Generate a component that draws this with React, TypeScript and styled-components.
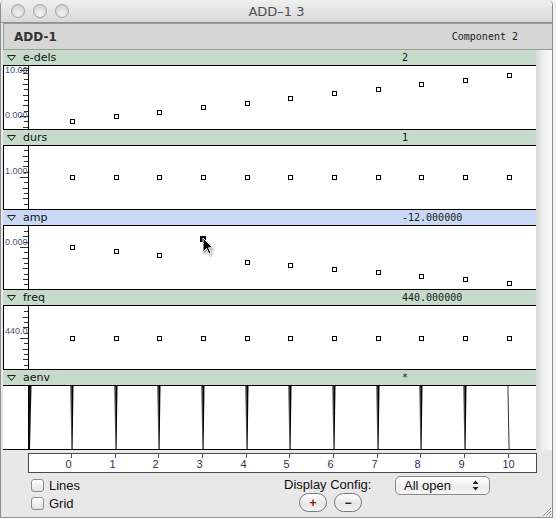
import React from "react";
import styled, { createGlobalStyle } from "styled-components";

const GlobalStyle = createGlobalStyle`
  html, body { margin: 0; padding: 0; background: #f2f2f2; }
  body { font-family: "DejaVu Sans", "Liberation Sans", sans-serif; }
`;

// x of each point inside a plot (plot starts at page x 29)
const XS = Array.from({ length: 11 }, (_, i) => 43 + i * 43.65);

type RulerMark = { text: string; base: number; tick: number };
type PanelData = {
  name: string;
  value: string;
  selected?: boolean;
  ys?: number[];
  ruler?: RulerMark[];
  envelope?: boolean;
};

const panels: PanelData[] = [
  {
    name: "e-dels",
    value: "2",
    ys: XS.map((_, i) => 55 - i * 4.6),
    ruler: [
      { text: "10.00", base: 7, tick: 4 },
      { text: "0.000", base: 52, tick: 50 },
    ],
  },
  {
    name: "durs",
    value: "1",
    ys: XS.map(() => 31),
    ruler: [{ text: "1.000", base: 28, tick: 31 }],
  },
  {
    name: "amp",
    value: "-12.000000",
    selected: true,
    ys: [21, 25, 29, 13, 36, 39, 43, 46, 50, 53, 57],
    ruler: [{ text: "0.000", base: 19, tick: 21 }],
  },
  {
    name: "freq",
    value: "440.000000",
    ys: XS.map(() => 32),
    ruler: [{ text: "440.0", base: 28, tick: 32 }],
  },
  { name: "aenv", value: "*", envelope: true },
];

const Window = styled.div`
  width: 553px;
  height: 518px;
  box-sizing: border-box;
  display: flex;
  flex-direction: column;
  background: #e8e8e8;
  border: 1px solid #8e8e8e;
  border-top: none;
  border-radius: 5px 5px 0 0;
  overflow: hidden;
`;

const TitleBar = styled.div`
  height: 22px;
  flex: 0 0 auto;
  display: grid;
  grid-template-columns: 1fr auto 1fr;
  align-items: center;
  background: linear-gradient(#f0f0f0, #d8d8d8);
  border-bottom: 1px solid #8f8f8f;
`;

const Lights = styled.div`
  display: flex;
  gap: 8px;
  padding-left: 10px;
`;

const Light = styled.span`
  width: 12px;
  height: 12px;
  border-radius: 50%;
  border: 1px solid #a4a4a4;
  background: radial-gradient(circle at 50% 70%, #f4f4f4, #d6d6d6 70%);
`;

const Title = styled.div`
  font-size: 13px;
  color: #505050;
  padding-top: 1px;
`;

const Header = styled.div`
  margin-left: 2px;
  height: 27px;
  box-sizing: border-box;
  flex: 0 0 auto;
  display: flex;
  align-items: center;
  justify-content: space-between;
  padding: 0 34px 0 10px;
  background: #d6d6d6;
  border: 1px solid #9a9a9a;
  border-right: none;
`;

const HeaderName = styled.span`
  font-weight: bold;
  font-size: 12px;
  color: #333;
`;

const HeaderComp = styled.span`
  font: 10px "DejaVu Sans Mono", monospace;
  color: #222;
`;

const Main = styled.div`
  display: flex;
  padding-left: 2px;
  flex: 0 0 auto;
`;

const Panels = styled.div`
  width: 533px;
`;

const Strip = styled.div`
  flex: 1;
  background: linear-gradient(to right, #d9d9d9, #efefef 45%, #f9f9f9);
`;

const LabelBar = styled.div<{ $selected?: boolean }>`
  height: 15px;
  display: grid;
  grid-template-columns: 20px 379px 1fr;
  align-items: center;
  background: ${(p) => (p.$selected ? "#c9d9f5" : "#c6dbc9")};
  font-size: 11px;
  color: #111;
  line-height: 15px;
`;

const Toggle = styled.svg`
  margin-left: 4px;
`;

const Value = styled.span`
  font: 10px "DejaVu Sans Mono", monospace;
  color: #1a1a1a;
`;

const Body = styled.div`
  height: 65px;
  box-sizing: border-box;
  display: flex;
  border-top: 1px solid #000;
  border-bottom: 1px solid #000;
`;

const Ruler = styled.div<{ $bare?: boolean }>`
  width: 26px;
  box-sizing: border-box;
  background: #fff;
  border-left: 1px solid ${(p) => (p.$bare ? "#fff" : "#000")};
  border-right: 1px solid #000;
`;

const Plot = styled.div`
  flex: 1;
  position: relative;
  background: #fff;
`;

const Cursor = styled.svg`
  position: absolute;
  left: 173px;
  top: 11px;
  filter: drop-shadow(1px 2px 1px rgba(0, 0, 0, 0.35));
`;

const Handle = styled.span`
  position: absolute;
  left: 171px;
  top: 10px;
  width: 6px;
  height: 6px;
  background: #000;
`;

const AxisRow = styled.div`
  padding: 3px 0 0 27px;
  flex: 0 0 auto;
`;

const AxisBox = styled.div`
  width: 509px;
  height: 20px;
  box-sizing: border-box;
  border: 1px solid #4a4a4a;
  background: #fff;
`;

const BottomBar = styled.div`
  flex: 1;
  position: relative;
  display: grid;
  grid-template-columns: 253px 111px auto;
  align-items: start;
  padding: 5px 0 0 30px;
  font: 13px "Liberation Sans", Arial, sans-serif;
  color: #111;
`;

const CheckCol = styled.div`
  display: flex;
  flex-direction: column;
  gap: 4px;
`;

const CheckRow = styled.label`
  display: flex;
  align-items: center;
  gap: 5px;
  height: 14px;
`;

const Box = styled.span`
  width: 13px;
  height: 13px;
  box-sizing: border-box;
  border: 1px solid #8c8c8c;
  border-radius: 3px;
  background: linear-gradient(#ffffff, #e2e2e2);
`;

const ConfigCol = styled.div`
  display: flex;
  flex-direction: column;
`;

const ConfigLabel = styled.span`
  line-height: 14px;
`;

const ButtonRow = styled.div`
  display: flex;
  gap: 7px;
  padding-left: 15px;
  margin-top: 1px;
`;

const RoundButton = styled.button<{ $tone?: string }>`
  width: 28px;
  height: 19px;
  padding: 0;
  border-radius: 10px;
  border: 1px solid #7a7a7a;
  background: linear-gradient(#ffffff, #e6e6e6 60%, #f4f4f4);
  font: bold 12px "Liberation Sans", Arial, sans-serif;
  line-height: 16px;
  color: ${(p) => p.$tone || "#222"};
`;

const Popup = styled.div`
  width: 95px;
  height: 19px;
  box-sizing: border-box;
  margin-top: -2px;
  display: flex;
  align-items: center;
  border: 1px solid #8a8a8a;
  border-radius: 5px;
  background: linear-gradient(#ffffff, #ececec 60%, #f6f6f6);
`;

const PopupText = styled.span`
  flex: 1;
  padding-left: 8px;
`;

const PopupArrows = styled.svg`
  margin-right: 10px;
`;

const Grip = styled.svg`
  position: absolute;
  right: 0;
  bottom: 0;
`;

const RulerSvg = ({ marks }: { marks: RulerMark[] }) => {
  const ticks: { y: number; len: number }[] = [];
  const base = marks[marks.length - 1].tick;
  for (let k = -12; k <= 12; k++) {
    const y = base + k * 5.33;
    if (y < 1 || y > 62) continue;
    ticks.push({ y, len: k === 0 ? 7 : k % 2 === 0 ? 5 : 4 });
  }
  return (
    <svg width="24" height="63">
      {ticks.map((t, i) => (
        <line key={i} x1={24 - t.len} x2={24} y1={Math.round(t.y) + 0.5} y2={Math.round(t.y) + 0.5} stroke="#333" />
      ))}
      {marks.map((m) => (
        <line key={m.text + "t"} x1={16} x2={24} y1={m.tick + 0.5} y2={m.tick + 0.5} stroke="#333" />
      ))}
      {marks.map((m) => (
        <text key={m.text} x={1} y={m.base} fontSize="9" fontFamily="Liberation Sans, Arial, sans-serif" fill="#4a5575">
          {m.text}
        </text>
      ))}
    </svg>
  );
};

const Dots = ({ ys }: { ys: number[] }) => (
  <svg width="507" height="63">
    {XS.map((x, i) => {
      const cx = Math.round(x);
      const cy = Math.round(ys[i]);
      return <rect key={i} x={cx - 2 + 0.5} y={cy - 2 + 0.5} width="4" height="4" fill="#fff" stroke="#000" />;
    })}
  </svg>
);

const Envelope = () => (
  <svg width="507" height="63">
    <polygon points="0,0 2.5,0 1,63 0,63" fill="#111" />
    {XS.map((x, i) => {
      const cx = Math.round(x);
      if (i === 10) return <polygon key={i} points={`${cx - 1.6},0 ${cx - 0.6},0 ${cx + 0.6},63 ${cx - 0.4},63`} fill="#333" />;
      return (
        <g key={i}>
          <polygon points={`${cx - 2},0 ${cx},0 ${cx},63 ${cx - 0.5},63`} fill="#777" />
          <polygon points={`${cx - 0.5},0 ${cx + 1.5},0 ${cx + 0.6},63 ${cx - 0.3},63`} fill="#000" />
        </g>
      );
    })}
  </svg>
);

const Panel = ({ p }: { p: PanelData }) => (
  <div>
    <LabelBar $selected={p.selected}>
      <Toggle width="9" height="6" viewBox="0 0 9 6">
        <path d="M0.5 0.5 H8.5 L4.5 5.5 Z" fill="none" stroke="#222" />
      </Toggle>
      <span>{p.name}</span>
      <Value>{p.value}</Value>
    </LabelBar>
    <Body>
      <Ruler $bare={p.envelope}>{p.ruler && <RulerSvg marks={p.ruler} />}</Ruler>
      <Plot>
        {p.envelope ? <Envelope /> : <Dots ys={p.ys || []} />}
        {p.selected && (
          <>
            <Handle />
            <Cursor width="14" height="20" viewBox="0 0 14 20">
              <path d="M1 1 L1 15 L4.5 11.6 L7 17 L9 16 L6.6 10.8 L11 10.8 Z" fill="#000" stroke="#fff" strokeWidth="1" />
            </Cursor>
          </>
        )}
      </Plot>
    </Body>
  </div>
);

export default function App() {
  return (
    <>
      <GlobalStyle />
      <Window>
        <TitleBar>
          <Lights>
            <Light />
            <Light />
            <Light />
          </Lights>
          <Title>ADD–1 3</Title>
          <span />
        </TitleBar>
        <Header>
          <HeaderName>ADD-1</HeaderName>
          <HeaderComp>Component 2</HeaderComp>
        </Header>
        <Main>
          <Panels>
            {panels.map((p) => (
              <Panel key={p.name} p={p} />
            ))}
          </Panels>
          <Strip />
        </Main>
        <AxisRow>
          <AxisBox>
            <svg width="507" height="18">
              {XS.map((x, i) => {
                const cx = Math.round(x) - 0.5;
                return (
                  <g key={i}>
                    <line x1={cx} x2={cx} y1={0} y2={4} stroke="#555" />
                    <text x={cx - 6} y={14} fontSize="11" fontFamily="Liberation Sans, Arial, sans-serif" fill="#2e2e55">
                      {i}
                    </text>
                  </g>
                );
              })}
            </svg>
          </AxisBox>
        </AxisRow>
        <BottomBar>
          <CheckCol>
            <CheckRow>
              <Box />
              Lines
            </CheckRow>
            <CheckRow>
              <Box />
              Grid
            </CheckRow>
          </CheckCol>
          <ConfigCol>
            <ConfigLabel>Display Config:</ConfigLabel>
            <ButtonRow>
              <RoundButton $tone="#8a1010">+</RoundButton>
              <RoundButton>−</RoundButton>
            </ButtonRow>
          </ConfigCol>
          <Popup>
            <PopupText>All open</PopupText>
            <PopupArrows width="7" height="11" viewBox="0 0 7 11">
              <path d="M3.5 0.5 L6.5 4 H0.5 Z M3.5 10.5 L6.5 7 H0.5 Z" fill="#222" />
            </PopupArrows>
          </Popup>
          <Grip width="12" height="12" viewBox="0 0 12 12">
            <path d="M11 3 L3 11 M11 6 L6 11 M11 9 L9 11" stroke="#9a9a9a" strokeWidth="1" />
          </Grip>
        </BottomBar>
      </Window>
    </>
  );
}
